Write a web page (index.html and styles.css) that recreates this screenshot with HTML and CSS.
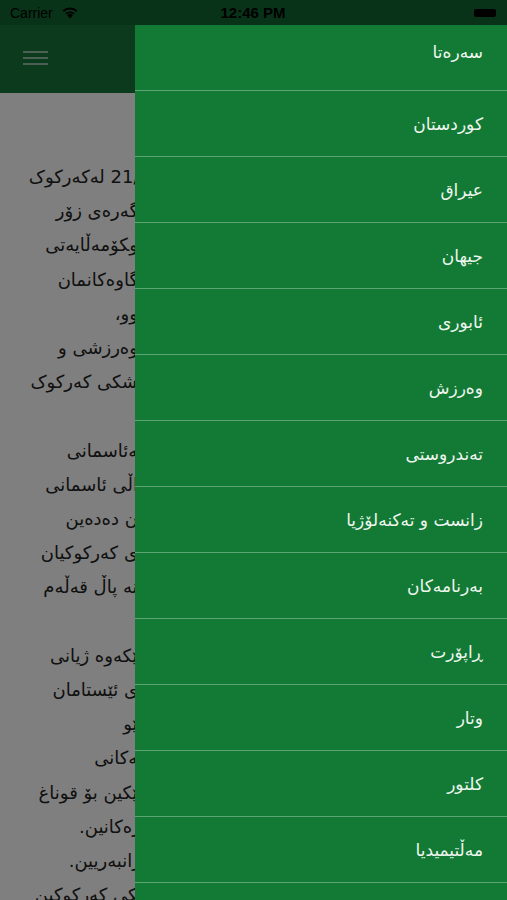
FILE: index.html
```html
<!DOCTYPE html>
<html lang="ckb">
    <head>
        <meta charset="UTF-8">
        <title>Kurdistan News</title>
        <link rel="stylesheet" href="styles.css">
    </head>
    <body>
        <div class="screen">
            <div class="status">
                <div class="carrier">
                    Carrier
                    <svg class="wifi" width="18" height="13" viewBox="0 0 18 13">
                        <path d="M9 12.5 L6.2 9.4 A4 4 0 0 1 11.8 9.4 Z" fill="#000"/>
                        <path d="M4.3 7.3 A6.8 6.8 0 0 1 13.7 7.3 L12.5 8.6 A5.1 5.1 0 0 0 5.5 8.6 Z" fill="#000"/>
                        <path d="M1.6 4.5 A10.6 10.6 0 0 1 16.4 4.5 L15.1 5.9 A8.8 8.8 0 0 0 2.9 5.9 Z" fill="#000"/>
                    </svg>
                </div>
                <div class="time">12:46 PM</div>
                <div class="battery"><span></span></div>
            </div>

            <header class="nav">
                <button type="button" class="menu-btn">
                    <span></span><span></span><span></span>
                </button>
            </header>

            <main class="article">
                <div class="pushed">21/1 لەکەرکوک</div>
                <div>گەرەی زۆر</div>
                <div>و&zwj;کۆمەڵایەتی&nbsp;&nbsp;</div>
                <div>گاوەکانمان</div>
                <div>وو،</div>
                <div>وەرزشی و</div>
                <div>&zwj;شکی کەرکوک</div>
                <div>&nbsp;</div>
                <div>&zwj;ەئاسمانی</div>
                <div>اڵی ئاسمانی</div>
                <div>ن دەدەین</div>
                <div>ی کەرکوکیان</div>
                <div>&zwj;نە پاڵ قەڵەم</div>
                <div>&nbsp;</div>
                <div>&zwj;ێکەوە ژیانی</div>
                <div>ی ئێستامان</div>
                <div>&zwj;ێو&nbsp;</div>
                <div>&zwj;ەکانی</div>
                <div>&zwj;ێکین بۆ قوناغ</div>
                <div class="pushed-s">زەکانین.</div>
                <div class="pushed-s">رانبەریین.</div>
                <div>&zwj;کی کەرکوکین&nbsp;</div>
            </main>

            <div class="overlay"></div>

            <nav class="drawer">
                <ul>
                    <li class="first">سەرەتا</li>
                    <li>کوردستان</li>
                    <li>عیراق</li>
                    <li>جیهان</li>
                    <li>ئابوری</li>
                    <li>وەرزش</li>
                    <li>تەندروستی</li>
                    <li>زانست و تەکنەلۆژیا</li>
                    <li>بەرنامەکان</li>
                    <li>ڕاپۆرت</li>
                    <li>وتار</li>
                    <li>کلتور</li>
                    <li>مەڵتیمیدیا</li>
                </ul>
            </nav>
        </div>
    </body>
</html>
```

FILE: styles.css
```css
body {
    margin: 0;
    font-family: "DejaVu Sans", sans-serif;
}

.screen {
    position: relative;
    width: 507px;
    height: 900px;
    overflow: hidden;
    background: #ffffff;
}

/* status bar */
.status {
    height: 25px;
    background: #106630;
    display: grid;
    grid-template-columns: 1fr auto 1fr;
    align-items: center;
    padding: 0 11px 0 10px;
    font-family: "Liberation Sans", sans-serif;
    font-size: 14px;
    color: #000;
}

.carrier {
    display: flex;
    align-items: center;
    gap: 8px;
}

.time {
    font-weight: bold;
    font-size: 15px;
}

.battery {
    justify-self: end;
}

.battery span {
    display: block;
    width: 22px;
    height: 8px;
    border-radius: 2px;
    background: #000;
}

/* nav bar */
.nav {
    height: 68px;
    background: #16743a;
    display: flex;
    align-items: center;
}

.menu-btn {
    margin-left: 23px;
    margin-top: -2px;
    padding: 0;
    border: 0;
    background: none;
    display: flex;
    flex-direction: column;
    gap: 4px;
}

.menu-btn span {
    display: block;
    width: 25px;
    height: 2px;
    background: #ffffff;
    opacity: 0.55;
}

/* article behind drawer */
.article {
    width: 138px;
    padding-top: 67px;
    direction: rtl;
    text-align: right;
    font-size: 18px;
    line-height: 34.2px;
    color: #222;
    white-space: nowrap;
}

/* lines whose start runs further under the drawer */
.article .pushed {
    margin-right: -13px;
}

.article .pushed-s {
    margin-right: -3px;
}

.overlay {
    position: absolute;
    inset: 0;
    background: rgba(0, 0, 0, 0.5);
}

/* side drawer */
.drawer {
    position: absolute;
    top: 25px;
    left: 135px;
    right: 0;
    bottom: 0;
    background: #137a35;
}

.drawer ul {
    list-style: none;
    margin: 0;
    padding: 0;
    direction: rtl;
}

.drawer li {
    height: 65px;
    border-bottom: 1px solid #5ea374;
    display: flex;
    align-items: center;
    padding-right: 24px;
    font-size: 17px;
    color: #eef6ef;
}

.drawer li.first {
    padding-bottom: 12px;
    height: 53px;
}
```
